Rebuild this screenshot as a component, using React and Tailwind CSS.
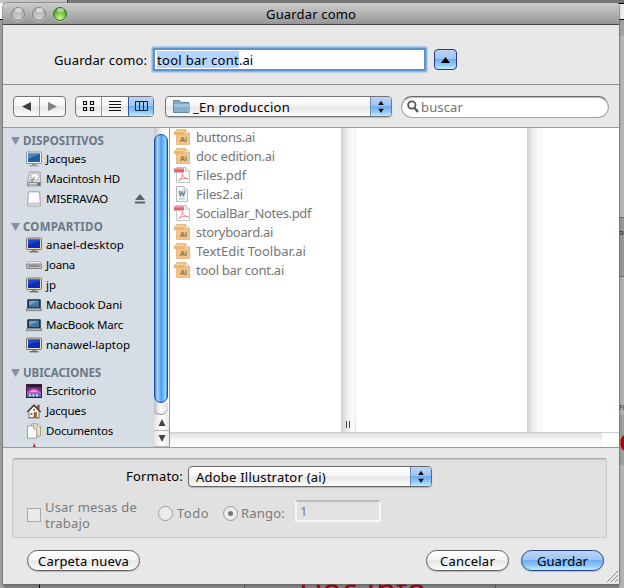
import React, { useLayoutEffect, useRef } from "react";

// Text that tracks its letters so that the line fills the given width.
function Fit({ w, children, className = "" }) {
  const ref = useRef(null);
  useLayoutEffect(() => {
    const el = ref.current;
    el.style.letterSpacing = "0px";
    const natural = el.getBoundingClientRect().width;
    el.style.letterSpacing = `${(w - natural) / children.length}px`;
  }, [w, children]);
  return (
    <span ref={ref} className={`inline-block shrink-0 whitespace-pre ${className}`}>
      {children}
    </span>
  );
}

const aqua = "bg-[linear-gradient(180deg,#bdd4f3_0%,#9cc4f1_47%,#6fadee_50%,#8cc5f8_75%,#bdf0ff_100%)]";
const silver = "bg-[linear-gradient(180deg,#ffffff_0%,#f5f5f5_45%,#e6e6e6_52%,#fbfbfb_100%)]";

function Light({ green }) {
  return (
    <span
      className={`h-[14px] w-[14px] rounded-full border ${
        green
          ? "border-[#3c6b2a] bg-[radial-gradient(circle_at_50%_85%,#cdf78c_0%,#7bc843_45%,#458d2b_85%)]"
          : "border-[#838383] bg-[radial-gradient(circle_at_50%_80%,#d2d2d2_0%,#b8b8b8_55%,#9c9c9c_100%)]"
      } shadow-[0_1px_0_#c8c8c8]`}
    >
      <span className="mx-auto block h-[4px] w-[7px] rounded-full bg-white/50" />
    </span>
  );
}

function Arrows() {
  return (
    <span className={`flex h-full w-[21px] items-center justify-center border-l border-[#6d8fc4] ${aqua}`}>
      <svg width="8" height="14" viewBox="0 0 8 14">
        <path d="M4 .8 6.8 5H1.2zM4 13 6.8 8.8H1.2z" fill="#0a0d18" />
      </svg>
    </span>
  );
}

function Pc({ beige }) {
  return (
    <svg width="16" height="16" viewBox="0 0 16 16">
      <rect x=".5" y="1" width="15" height="11.5" rx=".8" fill={beige ? "#e5dfb9" : "#f3f5f7"} stroke={beige ? "#77745f" : "#89929b"} />
      <rect x="2" y="2.5" width="12" height="8.5" fill={beige ? "#0d2bb8" : "#1e5da0"} />
      <path d={beige ? "M2 2.5h12v2C9 4 6 7 2 8z" : "M2 2.5h12L2 8z"} fill={beige ? "#1f47cf" : "#5288c2"} />
      <path d="M6 13h4v1.2H6z" fill="#8c8c82" />
      <path d="M3.5 14h9v1.4h-9z" fill={beige ? "#77745f" : "#a1a5aa"} />
    </svg>
  );
}
function Drive() {
  return (
    <svg width="16" height="16" viewBox="0 0 16 16">
      <path d="M3.500 1H14l.8 9v5H1.500v-4z" fill="#dcdcdc" stroke="#909090" strokeWidth=".7" />
      <ellipse cx="9" cy="5.500" rx="4" ry="3.500" fill="#f7f7f7" stroke="#a9a9a9" strokeWidth=".7" />
      <path d="m9 5-5.500 5 3.500 1z" fill="#9a9a9a" />
      <path d="M1.500 11h13.300v4H1.500z" fill="#8d8d8d" />
      <path d="M2.500 12.500h8.500M2.500 14h8.500" stroke="#e4e4e4" strokeWidth=".8" />
      <path d="M12 13h2" stroke="#3d3d3d" />
    </svg>
  );
}
function Removable() {
  return (
    <svg width="16" height="16" viewBox="0 0 16 16">
      <path d="M2.5.8h11l.8 11V15H1.700v-3.200z" fill="#fcfcfc" stroke="#9b9b9b" strokeWidth=".9" />
      <path d="M2 12.200h12V15H2z" fill="#d0d0d0" />
      <path d="M2 12h12" stroke="#b7b7b7" strokeWidth=".7" />
    </svg>
  );
}
function Mini() {
  return (
    <svg width="16" height="16" viewBox="0 0 16 16">
      <path d="M2 4.500h12l1.500 3H.5z" fill="#ececec" stroke="#9c9c9c" strokeWidth=".6" />
      <rect x=".5" y="7" width="15" height="4.500" rx=".7" fill="#bdbdbd" stroke="#777" strokeWidth=".8" />
      <path d="M2.500 9h11" stroke="#5e5e5e" />
    </svg>
  );
}
function Laptop() {
  return (
    <svg width="16" height="16" viewBox="0 0 16 16">
      <rect x="1.500" y="2.500" width="13" height="9" rx=".7" fill="#1d3045" stroke="#4a5159" />
      <path d="M3 3.800h10v6.400H3z" fill="#3c76a3" />
      <path d="M3 3.800h10L3 8.500z" fill="#6fa2c4" />
      <path d="M.5 11.500h15l.4 2.200H.1z" fill="#a0a3a7" stroke="#5d6166" strokeWidth=".5" />
      <path d="M1.500 12h13" stroke="#d5d8dc" strokeWidth=".6" />
    </svg>
  );
}
function Desk() {
  return (
    <svg width="16" height="16" viewBox="0 0 16 16">
      <rect x=".5" y="1.500" width="15" height="13" fill="#6b2d78" stroke="#3a2141" />
      <path d="M1 2h14v2H1z" fill="#2d1735" />
      <path d="M1 9Q8 2 15 9v2H1z" fill="#c65abb" />
      <path d="M4 9Q8 5 12 9z" fill="#f1a0df" />
      <path d="M1 11h14v3H1z" fill="#5b6bb3" />
      <path d="M3 12.300h10" stroke="#dcefff" strokeWidth="1.800" strokeDasharray="2 1.500" />
    </svg>
  );
}
function House() {
  return (
    <svg width="16" height="16" viewBox="0 0 16 16">
      <path d="M11.500 2h1.800v4h-1.800z" fill="#a65435" stroke="#5b3526" strokeWidth=".4" />
      <path d="M3 8 8 3l5 5v6.500H3z" fill="#fffdf2" stroke="#554d41" strokeWidth=".8" />
      <path d="M1.200 9 8 2l6.800 7" fill="none" stroke="#4e4138" strokeWidth="1.400" />
      <path d="M8 9.500h2.500v5H8z" fill="#b75d2d" stroke="#713817" strokeWidth=".5" />
      <circle cx="8" cy="6.700" r="1" fill="#a13b27" />
      <path d="M4.500 10h1.800v2H4.500z" fill="#6e6a62" />
      <path d="M2 15h12" stroke="#8b8c70" />
    </svg>
  );
}
function Docs() {
  return (
    <svg width="16" height="16" viewBox="0 0 16 16">
      <path d="M5.5.8h6l3 3V13h-9z" fill="#ece7bd" stroke="#8d8862" strokeWidth=".7" />
      <path d="M11.5.8v3h3" fill="#fffce4" stroke="#8d8862" strokeWidth=".6" />
      <path d="M1.500 2.800h6l3.200 3.200v9.200H1.500z" fill="#fafafa" stroke="#8b8b8b" strokeWidth=".8" />
      <path d="M7.500 2.800V6h3.200" fill="#ddd" stroke="#8b8b8b" strokeWidth=".6" />
    </svg>
  );
}
function RedApp() {
  return (
    <svg width="16" height="16" viewBox="0 0 16 16">
      <path d="m8 0 1.500 3L13 15H2l5-11z" fill="#bb1e2d" />
    </svg>
  );
}

function AiFile() {
  return (
    <span className="relative block h-4 w-4">
      <svg width="16" height="16" viewBox="0 0 16 16">
        <path d="M2.500.5h9l4 4v11h-13z" fill="#f4c283" stroke="#dfae70" strokeWidth=".7" />
        <path d="M0 2h10v4H0z" fill="#ecb574" />
        <path d="M0 2h10v1H0z" fill="#f9d5a0" />
        <path d="M11.500.5v4h4z" fill="#fff4e4" stroke="#cfae83" strokeWidth=".6" />
      </svg>
      <span className="absolute left-[6px] top-[6px] text-[7px] leading-[9px] font-bold text-[#8a7556]">Ai</span>
    </span>
  );
}
function PdfFile() {
  return (
    <svg width="16" height="16" viewBox="0 0 16 16">
      <path d="M2.500.5h9l4 4v11h-13z" fill="#fdfdfd" stroke="#b9b9b9" strokeWidth=".8" />
      <path d="M11.500.5v4h4z" fill="#f3f3f3" stroke="#b9b9b9" strokeWidth=".6" />
      <path d="M0 1.500h10v4H0z" fill="#d9666e" />
      <path d="M0 1.500h10v1.200H0z" fill="#e88e93" />
      <path d="M4.500 13.500C7 12 9 8.500 8.500 6.500c-.8-1 0 5 6 5.300C11 10.500 7 11.500 4.500 13.500z" fill="none" stroke="#ed7f85" strokeWidth=".9" />
    </svg>
  );
}
function WordFile() {
  return (
    <svg width="16" height="16" viewBox="0 0 16 16">
      <path d="M2.500.5h7.500l3.500 3.500v11.500h-11z" fill="#f8f8f8" stroke="#a8a8a8" strokeWidth=".8" />
      <path d="M10 .5V4h3.500" fill="#e7e7e7" stroke="#a8a8a8" strokeWidth=".6" />
      <path d="M4.500 4.500h7v6h-7z" fill="#d5dae0" />
      <path d="m5 5 1.500 4.500L8 6l1.500 3.500L11 5" fill="none" stroke="#758396" strokeWidth="1.200" />
      <path d="M5 12.800h6" stroke="#a9a9a9" />
    </svg>
  );
}

const groups = [
  { title: "DISPOSITIVOS", w: 81, items: [["Jacques", 40, Pc], ["Macintosh HD", 74, Drive], ["MISERAVAO", 62, Removable, true]] },
  {
    title: "COMPARTIDO", w: 80,
    items: [["anael-desktop", 78, "beige"], ["Joana", 29, Mini], ["jp", 10, "beige"], ["Macbook Dani", 76, Laptop], ["MacBook Marc", 77, Laptop], ["nanawel-laptop", 84, "beige"]],
  },
  { title: "UBICACIONES", w: 78, items: [["Escritorio", 50, Desk], ["Jacques", 40, House], ["Documentos", 67, Docs], ["Aplicaciones", 68, RedApp]] },
];

const files = [
  ["buttons.ai", 59, AiFile], ["doc edition.ai", 79, AiFile], ["Files.pdf", 50, PdfFile], ["Files2.ai", 47, WordFile],
  ["SocialBar_Notes.pdf", 115, PdfFile], ["storyboard.ai", 77, AiFile], ["TextEdit Toolbar.ai", 110, AiFile], ["tool bar cont.ai", 88, AiFile],
];

function Sidebar() {
  return (
    <div className="h-full w-[151px] shrink-0 overflow-hidden bg-[#d6dde5] pt-[5px] text-[11.500px]">
      {groups.map((g) => (
        <div key={g.title} className="mb-[10px]">
          <div className="flex h-4 items-center pl-2 font-bold text-[#6b7887]">
            <svg width="9" height="8" viewBox="0 0 9 8" className="mr-[3px]"><path d="M0 0h9L4.500 8z" fill="#858f9e" /></svg>
            <Fit w={g.w}>{g.title}</Fit>
          </div>
          {g.items.map(([name, w, Icon, eject]) => (
            <div key={name} className="flex h-5 items-center pl-[23px]">
              {Icon === "beige" ? <Pc beige /> : <Icon />}
              <Fit w={w} className="ml-1">{name}</Fit>
              {eject && (
                <svg width="10" height="10" viewBox="0 0 10 10" className="ml-auto mr-[9px]"><path d="m5 0 5 6H0zM0 7.500h10v2H0z" fill="#5b6168" /></svg>
              )}
            </div>
          ))}
        </div>
      ))}
    </div>
  );
}

function Scrollbar() {
  return (
    <div className="flex h-full w-[16px] shrink-0 flex-col border-r border-[#9a9a9a] bg-[linear-gradient(90deg,#c4c4c4,#f4f4f4_50%,#ffffff)]">
      <div className="mt-[6px] h-[269px] w-[14px] shrink-0 rounded-[7px] border border-[#1c4ba2] bg-[linear-gradient(90deg,#3b7fdb_0%,#a8d2fa_18%,#8cc3fa_32%,#4b9cf1_50%,#6bbdfa_72%,#8ee0ff_88%,#3a7dd0_100%)]" />
      <div className="-mt-[6px] h-[18px] w-[14px] shrink-0 rounded-b-[7px] border-b border-[#999] bg-[linear-gradient(90deg,#bbb,#fff_45%,#ddd)] [clip-path:inset(6px_0_0_0)]" />
      {["M4 0 7.500 7h-7z", "M4 7 .5 0h7z"].map((d) => (
        <div key={d} className="flex h-4 shrink-0 items-center justify-center border-b border-[#b8b8b8] bg-[linear-gradient(90deg,#e2e2e2,#fff_50%,#e9e9e9)]">
          <svg width="8" height="7" viewBox="0 0 8 7"><path d={d} fill="#444" /></svg>
        </div>
      ))}
    </div>
  );
}

const shade = "bg-[linear-gradient(90deg,#cfcfcf_0%,#ececec_40%,#fafafa_75%,#f7f7f7_100%)]";

function Browser() {
  return (
    <div className="flex h-full min-w-0 flex-1 flex-col bg-white">
      <div className="flex h-[304px]">
        <div className="w-[171px] shrink-0 text-[13px] text-[#757575]">
          {files.map(([name, w, Icon]) => (
            <div key={name} className="flex h-[19px] items-center pb-px pl-1">
              <Icon />
              <Fit w={w} className="ml-[6px]">{name}</Fit>
            </div>
          ))}
        </div>
        <div className={`flex w-[15px] shrink-0 flex-col justify-end ${shade}`}>
          <div className="flex h-[15px] items-center justify-center gap-[2px] border-r border-[#e5e5e5]">
            <span className="h-[7px] w-px bg-[#444]" />
            <span className="h-[7px] w-px bg-[#444]" />
          </div>
        </div>
        <div className="w-[171px] shrink-0" />
        <div className={`w-[15px] shrink-0 ${shade}`} />
      </div>
      <div className="h-[15px] w-full border-t border-[#cfcfcf]">
        <div className="h-full w-[432px] bg-[linear-gradient(180deg,#dedede_0%,#f4f4f4_45%,#ffffff_100%)]" />
      </div>
    </div>
  );
}

function Push({ w, tw, blue, children }) {
  return (
    <div className={`flex h-[21px] items-center justify-center rounded-full border shadow-[0_1px_1px_#0003] ${blue ? `border-[#2a3f8f] ${aqua}` : `border-[#5f5f5f] ${silver}`} ${w}`}>
      <Fit w={tw}>{children}</Fit>
    </div>
  );
}

function Backdrop() {
  return (
    <div className="absolute inset-0 bg-[#858585]">
      <div className="absolute left-0 top-0 h-full w-[4px] bg-[#a0a0a0]" />
      <div className="absolute left-0 top-0 h-[3px] w-[67px] bg-[#c4c4c4]" />
      <div className="absolute left-0 top-[3px] h-[17px] w-[3px] border-b border-black bg-white" />
      <div className="absolute left-[67px] top-0 h-[3px] w-[557px] border-l border-[#333] bg-[#777]" />
      <div className="absolute left-[619px] top-[3px] h-[17px] w-[5px] border-y border-black bg-[#ececec]" />
      <div className="absolute left-[619px] top-[20px] h-[16px] w-[5px] bg-[#a0a2a4]" />
      <div className="absolute left-[619px] top-[36px] h-[181px] w-[5px] bg-[#b5b5b3]" />
      <div className="absolute left-[619px] top-[217px] h-[60px] w-[5px] overflow-hidden border-y border-[#666] bg-[#979797] text-[7px] leading-[30px]">on</div>
      <div className="absolute left-[619px] top-[277px] h-[138px] w-[5px] bg-[#b0b0b0]" />
      <div className="absolute left-[619px] top-[403px] h-[12px] w-[5px] overflow-hidden text-[7px] leading-[10px] text-[#223]">Fir</div>
      <div className="absolute left-[619px] top-[415px] h-[50px] w-[5px] overflow-hidden bg-[#9e9e9e]">
        <span className="absolute left-0 top-[8px] text-[32px] font-bold leading-[34px] text-[#b4000f]">e</span>
      </div>
      <div className="absolute left-[619px] top-[465px] h-[123px] w-[5px] bg-[#b3b3b3]" />
      <div className="absolute left-[39px] top-[584px] h-[4px] w-[205px] border-l border-black bg-[#8b8b8b]" />
      <div className="absolute left-[244px] top-[584px] h-[4px] w-[252px] overflow-hidden border-x border-[#555] bg-[#858585]">
        <span className="absolute left-[54px] top-[-12px] whitespace-pre text-[32px] leading-[36px] text-[#a50012]">Doc Info</span>
      </div>
    </div>
  );
}

export default function App() {
  return (
    <div className="relative h-[588px] w-[624px] overflow-hidden font-['Noto_Sans','Open_Sans',sans-serif] text-[13px] leading-4 text-black">
      <Backdrop />
      <div className="absolute left-[3px] top-[3px] flex h-[581px] w-[616px] flex-col overflow-hidden rounded-t-[4px] bg-[#e8e8e8] shadow-[0_0_0_1px_#7779,0_1px_3px_#0006]">
        <div className="grid h-[22px] shrink-0 grid-cols-[1fr_auto_1fr] items-center border-b border-[#444] bg-[linear-gradient(180deg,#cdcdcd,#969696)]">
          <div className="flex gap-[7px] pl-2"><Light /><Light /><Light green /></div>
          <Fit w={90}>Guardar como</Fit>
        </div>

        <div className="flex h-[60px] shrink-0 items-center border-b border-[#909090] pb-px pl-[51px] pt-[11px]">
          <Fit w={93}>Guardar como:</Fit>
          <div className="ml-[6px] flex h-[23px] w-[273px] items-center rounded-[1px] border-2 border-[#5d92cf] bg-white pl-[2px] shadow-[0_0_0_1px_#8fb5e2,0_0_1px_2px_#b5cdea]">
            <span className="flex h-[17px] items-center bg-[#b4d5fe]"><Fit w={82}>tool bar cont</Fit></span>
            <Fit w={14}>.ai</Fit>
          </div>
          <div className={`ml-[8px] flex h-[21px] w-[23px] items-center justify-center rounded-[4px] border border-[#233c8c] ${aqua}`}>
            <svg width="9" height="6" viewBox="0 0 9 6"><path d="M4.500 0 9 6H0z" /></svg>
          </div>
        </div>

        <div className="flex h-[43px] shrink-0 items-center border-b border-[#999] pl-[10px] pt-px">
          <div className={`flex h-[21px] w-[53px] rounded-[4px] border border-[#747474] ${silver}`}>
            <span className="flex w-[26px] items-center justify-center border-r border-[#999]"><svg width="9" height="9" viewBox="0 0 9 9"><path d="M0 4.500 9 0v9z" fill="#3d3d3d" /></svg></span>
            <span className="flex flex-1 items-center justify-center"><svg width="9" height="9" viewBox="0 0 9 9"><path d="M9 4.500 0 0v9z" fill="#828282" /></svg></span>
          </div>
          <div className={`ml-[9px] flex h-[21px] w-[79px] overflow-hidden rounded-[4px] border border-[#747474] ${silver}`}>
            <span className="flex w-[26px] items-center justify-center border-r border-[#999]">
              <svg width="12" height="11" viewBox="0 0 12 11"><path d="M.5.5h3v3h-3zM7.500.5h3v3h-3zM.5 6.500h3v3h-3zM7.500 6.500h3v3h-3z" fill="none" stroke="#111" strokeWidth="1.200" /></svg>
            </span>
            <span className="flex w-[26px] items-center justify-center">
              <svg width="12" height="11" viewBox="0 0 12 11"><path d="M0 .5h12M0 3.500h12M0 6.500h12M0 9.500h12" stroke="#111" /></svg>
            </span>
            <span className={`flex flex-1 items-center justify-center border-l border-[#35549c] ${aqua}`}>
              <svg width="13" height="11" viewBox="0 0 13 11"><path d="M.5.5h12v9H.5zM4.500.5v9M8.500.5v9" fill="none" stroke="#102447" /></svg>
            </span>
          </div>
          <div className={`ml-[11px] flex h-[21px] w-[227px] items-center overflow-hidden rounded-[4px] border border-[#747474] shadow-[0_1px_1px_#0003] ${silver}`}>
            <svg width="17" height="15" viewBox="0 0 17 15" className="ml-[7px]">
              <path d="M.5 2.500v-1h6l1.500 2h8V13.500H.5z" fill="#7fa9c6" stroke="#5f89a8" />
              <path d="M1 5h15v8H1z" fill="#86b1ce" /><path d="M1 5h15v3H1z" fill="#9dc3dd" />
            </svg>
            <Fit w={97} className="ml-[3px]">_En produccion</Fit>
            <span className="ml-auto h-full"><Arrows /></span>
          </div>
          <div className="ml-[9px] flex h-[22px] w-[208px] items-center rounded-full border border-[#a5a5a5] border-t-[#666] bg-white pl-[5px] text-[#737373] shadow-[inset_0_1px_1px_#bbb]">
            <svg width="12" height="13" viewBox="0 0 12 13"><circle cx="4.800" cy="5" r="3.700" fill="none" stroke="#555" strokeWidth="1.800" /><path d="m7.500 8 3.500 4" stroke="#555" strokeWidth="2.200" /></svg>
            <Fit w={42} className="ml-[2px]">buscar</Fit>
          </div>
        </div>

        <div className="flex h-[320px] shrink-0 border-b border-[#999]">
          <Sidebar />
          <Scrollbar />
          <Browser />
        </div>

        <div className="flex flex-1 flex-col px-[9px] pt-[10px]">
          <div className="h-[80px] w-[595px] rounded-[3px] border border-[#cacaca] border-t-[#aaa] bg-[#e1e1e1] pt-[7px] shadow-[inset_0_1px_1px_#c8c8c8]">
            <div className="flex items-center pl-[113px]">
              <Fit w={57} className="-mt-[2px]">Formato:</Fit>
              <div className={`ml-[5px] flex h-[21px] w-[244px] items-center overflow-hidden rounded-[4px] border border-[#686868] pl-[7px] shadow-[0_1px_1px_#0003] ${silver}`}>
                <Fit w={130}>Adobe Illustrator (ai)</Fit>
                <span className="ml-auto h-full"><Arrows /></span>
              </div>
            </div>
            <div className="mt-[12px] flex text-[#7b7b7b]">
              <span className="ml-[14px] mt-[9px] h-[14px] w-[14px] border border-[#a8a8a8] bg-[#eaeaea]" />
              <div className="ml-[4px] flex w-[113px] flex-col items-start"><Fit w={92}>Usar mesas de</Fit><Fit w={45}>trabajo</Fit></div>
              <span className="mt-[7px] h-[15px] w-[15px] rounded-full border border-[#9b9b9b] bg-[#ececec]" />
              <Fit w={32} className="ml-[4px] mt-[6px]">Todo</Fit>
              <span className="ml-[14px] mt-[7px] flex h-[15px] w-[15px] items-center justify-center rounded-full border border-[#9b9b9b] bg-[#ececec]"><span className="h-[5px] w-[5px] rounded-full bg-[#777]" /></span>
              <Fit w={44} className="ml-[3px] mt-[6px]">Rango:</Fit>
              <div className="ml-[10px] mt-px h-[22px] w-[86px] border-2 border-[#f6f6f6] border-t-[#bbb] bg-[#e2e2e2] pl-[3px] pt-px">1</div>
            </div>
          </div>
          <div className="mt-[12px] flex pl-[15px]">
            <Push w="w-[113px]" tw={91}>Carpeta nueva</Push>
            <div className="ml-[286px]"><Push w="w-[83px]" tw={55}>Cancelar</Push></div>
            <div className="ml-[12px]"><Push w="w-[83px]" tw={51} blue>Guardar</Push></div>
          </div>
          <svg width="11" height="11" viewBox="0 0 11 11" className="-mr-[8px] ml-auto"><path d="M0 11 11 0M4 11l7-7M8 11l3-3" stroke="#8b8b8b" /></svg>
        </div>
      </div>
    </div>
  );
}
